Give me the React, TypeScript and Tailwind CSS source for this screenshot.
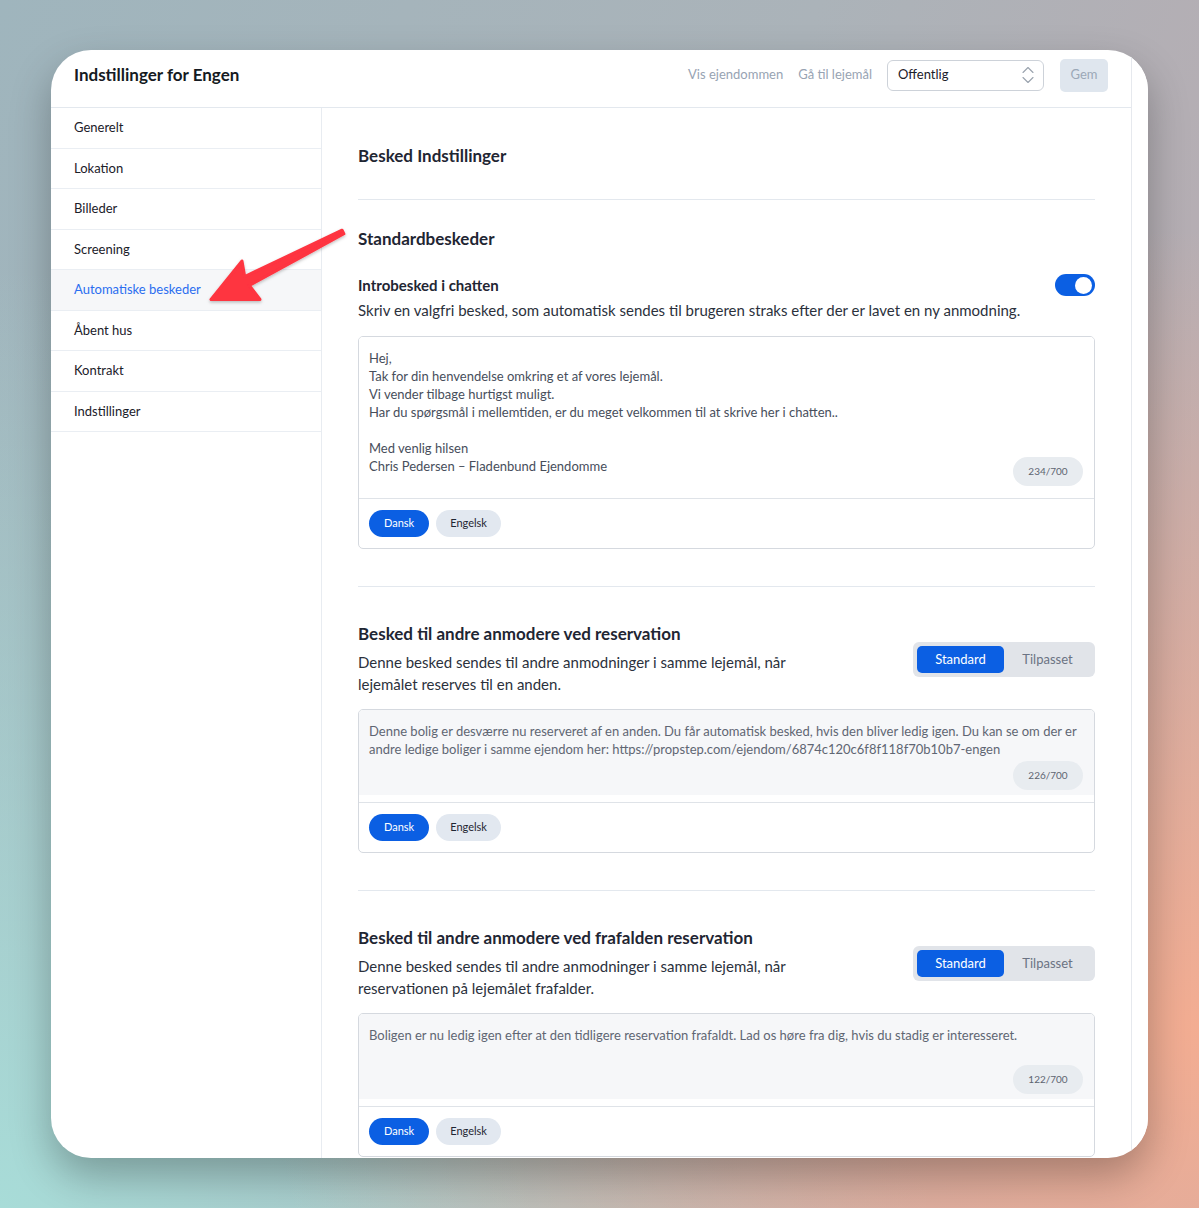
import React from "react";

// sidebar menu
const menu = [
  "Generelt",
  "Lokation",
  "Billeder",
  "Screening",
  "Automatiske beskeder",
  "Åbent hus",
  "Kontrakt",
  "Indstillinger",
];

const LangButtons = () => (
  <div className="flex gap-[7px] px-[10px] pt-[11px] pb-[11px]">
    <button className="h-[27px] px-[15px] rounded-full bg-[#0b5fe3] text-white text-[11px]">Dansk</button>
    <button className="h-[27px] px-[14px] rounded-full bg-[#e2e8f0] text-[#1f2633] text-[11px]">Engelsk</button>
  </div>
);

// tekstfelt med tæller
const MessageBox = ({
  lines,
  count,
  muted,
  areaH,
}: {
  lines: string[];
  count: string;
  muted?: boolean;
  areaH: string;
}) => (
  <div className="border border-[#d5d9df] rounded-[5px] overflow-hidden">
    <div className="pb-[7px]">
      <div className={`relative ${areaH} px-[10px] pt-[12px] ${muted ? "bg-[#f6f7f9] text-[#5f6673]" : "bg-white text-[#474e5b]"}`}>
        <div className="text-[13px] leading-[18px]">
          {lines.map((l, i) => (
            <div key={i} className="min-h-[18px]">{l}</div>
          ))}
        </div>
        <div className="absolute right-[11px] bottom-[5px] h-[29px] w-[70px] rounded-full bg-[#e8ecf0] text-[#5d6470] text-[10px] flex items-center justify-center">
          {count}
        </div>
      </div>
    </div>
    <div className="border-t border-[#dfe3e8]">
      <LangButtons />
    </div>
  </div>
);

const Segmented = () => (
  <div className="flex p-[4px] rounded-[6px] bg-[#e1e4e9] w-[182px] shrink-0">
    <div className="w-[87px] h-[27px] rounded-[5px] bg-[#0b5fe3] text-white text-[13px] flex items-center justify-center">Standard</div>
    <div className="w-[87px] h-[27px] text-[#6b7383] text-[13px] flex items-center justify-center">Tilpasset</div>
  </div>
);

const ReservationSection = ({ title, desc, lines, count }: { title: string; desc: string; lines: string[]; count: string }) => (
  <>
    <div className="mt-[37px] border-t border-[#e3e8ee]" />
    <div className="mt-[37px] flex items-center justify-between">
      <div className="w-[460px]">
        <div className="text-[17px] leading-[20px] font-bold text-[#1f2633]">{title}</div>
        <div className="mt-[7px] text-[15px] leading-[22px] text-[#2b313c]">{desc}</div>
      </div>
      <Segmented />
    </div>
    <div className="mt-[14px]">
      <MessageBox lines={lines} count={count} muted areaH="h-[85px]" />
    </div>
  </>
);

export default function App() {
  return (
    <div className="relative w-full h-[1208px] overflow-hidden font-['Lato',sans-serif] bg-[radial-gradient(ellipse_at_100%_85%,#f3ad92_0%,rgba(243,173,146,0)_55%),radial-gradient(ellipse_at_0%_100%,#a8dcd8_0%,rgba(168,220,216,0)_55%),linear-gradient(110deg,#9fb5bd_0%,#abb3b9_50%,#bdaaaf_100%)]">
      <div className="ml-[51px] mt-[50px] w-[1097px] h-[1108px] rounded-[40px] overflow-hidden bg-white flex shadow-[0_18px_40px_rgba(0,0,0,0.28)]">
        <div className="w-[1080px] flex flex-col">
          {/* header */}
          <div className="h-[58px] shrink-0 border-b border-[#e3e8ee] flex items-center justify-between px-[23px] pb-[7px]">
            <div className="text-[17px] font-bold text-[#151a22]">Indstillinger for Engen</div>
            <div className="flex items-center">
              <span className="text-[13px] text-[#97a3b3]">Vis ejendommen</span>
              <span className="ml-[15px] text-[13px] text-[#97a3b3]">Gå til lejemål</span>
              <div className="ml-[15px] w-[157px] h-[31px] border border-[#cdd2d9] rounded-[6px] flex items-center justify-between pl-[10px] pr-[8px]">
                <span className="text-[13px] text-[#1b2029]">Offentlig</span>
                <svg width="14" height="20" viewBox="0 0 14 20" fill="none" stroke="#9aa3ae" strokeWidth="1.1" strokeLinecap="round" strokeLinejoin="round">
                  <path d="M2 7.5 L7 2.5 L12 7.5" />
                  <path d="M2 12.5 L7 17.5 L12 12.5" />
                </svg>
              </div>
              <button className="ml-[16px] w-[48px] h-[33px] rounded-[5px] bg-[#dfe6ee] text-[#9ba8b7] text-[13px]">Gem</button>
            </div>
          </div>

          <div className="flex flex-1 min-h-0">
            {/* sidebar */}
            <div className="w-[271px] shrink-0 border-r border-[#e8ecf1]">
              {menu.map((m) => {
                const active = m === "Automatiske beskeder";
                return (
                  <div
                    key={m}
                    className={`h-[40.5px] border-b border-[#eaeef3] flex items-center pl-[23px] text-[13px] ${active ? "bg-[#f6f7f9] text-[#2a6ef0]" : "text-[#1b2029]"}`}
                  >
                    {m}
                  </div>
                );
              })}
            </div>

            {/* indhold */}
            <div className="flex-1 px-[36px] pt-[38px]">
              <div className="text-[17px] leading-[20px] font-bold text-[#1f2633]">Besked Indstillinger</div>
              <div className="mt-[33px] border-t border-[#e3e8ee]" />
              <div className="mt-[29px] text-[17px] leading-[20px] font-bold text-[#1f2633]">Standardbeskeder</div>

              <div className="mt-[25px] flex items-center justify-between h-[22px]">
                <div className="text-[15px] font-bold text-[#1f2633]">Introbesked i chatten</div>
                <div className="w-[40px] h-[22px] rounded-full bg-[#0b5fe3] flex items-center justify-end pr-[3px]">
                  <div className="w-[17px] h-[17px] rounded-full bg-white" />
                </div>
              </div>
              <div className="mt-[4px] text-[15px] leading-[20px] text-[#2b313c]">
                Skriv en valgfri besked, som automatisk sendes til brugeren straks efter der er lavet en ny anmodning.
              </div>

              <div className="mt-[16px]">
                <MessageBox
                  areaH="h-[154px]"
                  count="234/700"
                  lines={[
                    "Hej,",
                    "Tak for din henvendelse omkring et af vores lejemål.",
                    "Vi vender tilbage hurtigst muligt.",
                    "Har du spørgsmål i mellemtiden, er du meget velkommen til at skrive her i chatten..",
                    "",
                    "Med venlig hilsen",
                    "Chris Pedersen – Fladenbund Ejendomme",
                  ]}
                />
              </div>

              <ReservationSection
                title="Besked til andre anmodere ved reservation"
                desc="Denne besked sendes til andre anmodninger i samme lejemål, når lejemålet reserves til en anden."
                count="226/700"
                lines={[
                  "Denne bolig er desværre nu reserveret af en anden. Du får automatisk besked, hvis den bliver ledig igen. Du kan se om der er andre ledige boliger i samme ejendom her: https://propstep.com/ejendom/6874c120c6f8f118f70b10b7-engen",
                ]}
              />

              <ReservationSection
                title="Besked til andre anmodere ved frafalden reservation"
                desc="Denne besked sendes til andre anmodninger i samme lejemål, når reservationen på lejemålet frafalder."
                count="122/700"
                lines={[
                  "Boligen er nu ledig igen efter at den tidligere reservation frafaldt. Lad os høre fra dig, hvis du stadig er interesseret.",
                ]}
              />
            </div>
          </div>
        </div>
        {/* scrollbar-felt */}
        <div className="w-[17px] border-l border-[#e6e9ee] bg-white" />
      </div>

      {/* rød pil */}
      <svg className="absolute left-0 top-0 pointer-events-none" width="1199" height="1208" viewBox="0 0 1199 1208">
        <defs>
          <filter id="sh" x="-20%" y="-20%" width="140%" height="140%">
            <feDropShadow dx="0" dy="1.5" stdDeviation="1.5" floodColor="#000" floodOpacity="0.25" />
          </filter>
        </defs>
        <polygon
          filter="url(#sh)"
          points="342.1,230.2 244.7,276.5 242,261 211,299.5 260,299.5 249.3,285.5 343.9,233.8"
          fill="#fe3441"
          stroke="#fe3441"
          strokeWidth="3"
          strokeLinejoin="round"
        />
      </svg>
    </div>
  );
}
